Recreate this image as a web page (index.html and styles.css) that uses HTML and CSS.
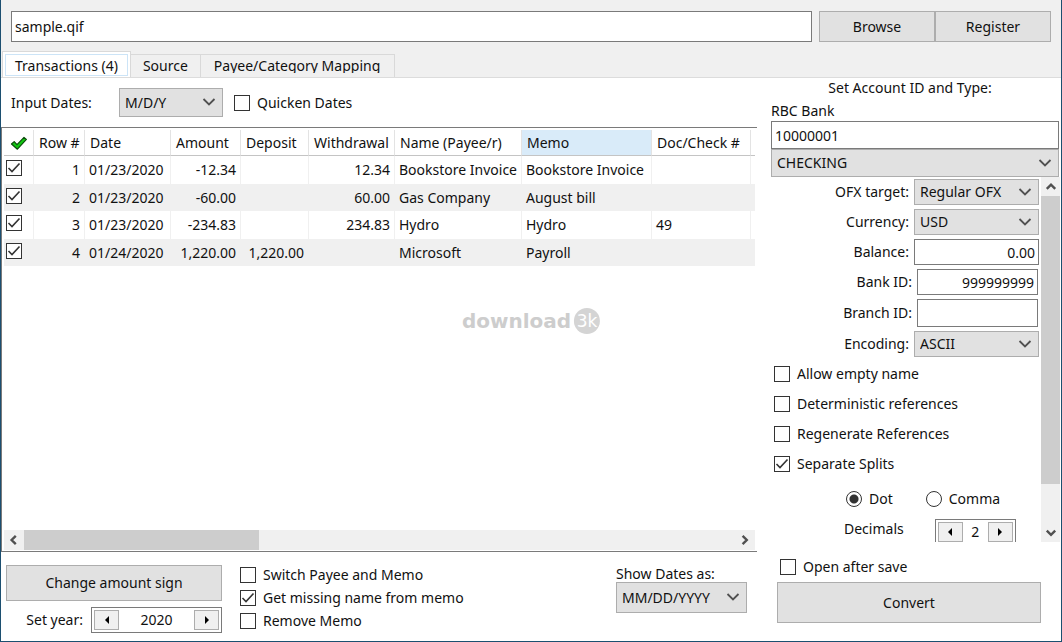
FILE: index.html
```html
<!DOCTYPE html>
<html lang="en">
<head>
<meta charset="utf-8">
<title>sample.qif</title>
<link rel="stylesheet" href="styles.css">
</head>
<body>
<div class="window">
  <header class="topbar">
    <input class="field file" type="text" value="sample.qif" aria-label="File">
    <div class="topbar-buttons">
      <button class="btn" type="button">Browse</button>
      <button class="btn" type="button">Register</button>
    </div>
  </header>

  <nav class="tabs" role="tablist">
    <button class="tab active" type="button" role="tab" aria-selected="true"><span>Transactions (4)</span></button>
    <button class="tab" type="button" role="tab"><span>Source</span></button>
    <button class="tab clipped" type="button" role="tab"><span>Payee/Category Mapping</span></button>
  </nav>

  <main class="panel">
    <section class="left">
      <div class="toolbar">
        <label class="toolbar-label" for="indates">Input Dates:</label>
        <select class="select indates" id="indates"><option>M/D/Y</option></select>
        <label class="check"><input type="checkbox"><span>Quicken Dates</span></label>
      </div>

      <div class="list">
        <table class="grid">
          <colgroup>
            <col class="c-check"><col class="c-row"><col class="c-date"><col class="c-amount"><col class="c-deposit"><col class="c-withdrawal"><col class="c-name"><col class="c-memo"><col class="c-doc"><col>
          </colgroup>
          <thead>
            <tr>
              <th class="mid"><svg class="tick" viewBox="0 0 18 15" aria-label="Selected"><path d="M1.5 8 L4.2 5.6 L7 8.6 L14 1.4 L16.4 3.4 L7.4 13.2 Z" fill="#12c812" stroke="#0b4d0b" stroke-width="1.2" stroke-linejoin="round"/></svg></th>
              <th>Row #</th><th>Date</th><th>Amount</th><th>Deposit</th><th>Withdrawal</th><th>Name (Payee/r)</th><th class="sorted">Memo</th><th>Doc/Check #</th><th></th>
            </tr>
          </thead>
          <tbody>
            <tr><td class="box"><input type="checkbox" checked aria-label="Row 1"></td><td class="num">1</td><td>01/23/2020</td><td class="num">-12.34</td><td class="num"></td><td class="num">12.34</td><td>Bookstore Invoice</td><td>Bookstore Invoice</td><td></td><td></td></tr>
            <tr><td class="box"><input type="checkbox" checked aria-label="Row 2"></td><td class="num">2</td><td>01/23/2020</td><td class="num">-60.00</td><td class="num"></td><td class="num">60.00</td><td>Gas Company</td><td>August bill</td><td></td><td></td></tr>
            <tr><td class="box"><input type="checkbox" checked aria-label="Row 3"></td><td class="num">3</td><td>01/23/2020</td><td class="num">-234.83</td><td class="num"></td><td class="num">234.83</td><td>Hydro</td><td>Hydro</td><td>49</td><td></td></tr>
            <tr><td class="box"><input type="checkbox" checked aria-label="Row 4"></td><td class="num">4</td><td>01/24/2020</td><td class="num">1,220.00</td><td class="num">1,220.00</td><td class="num"></td><td>Microsoft</td><td>Payroll</td><td></td><td></td></tr>
          </tbody>
        </table>
        <div class="hscroll">
          <button class="arrow" type="button" aria-label="Scroll left"><svg viewBox="0 0 10 10"><path d="M6.500 1.500 L3 5 L6.500 8.500"/></svg></button>
          <div class="htrack"><div class="hthumb"></div></div>
          <button class="arrow" type="button" aria-label="Scroll right"><svg viewBox="0 0 10 10"><path d="M3 1.500 L6.500 5 L3 8.500"/></svg></button>
        </div>
      </div>

      <footer class="left-foot">
        <div class="sign">
          <button class="btn" type="button">Change amount sign</button>
          <div class="year">
            <label for="year">Set year:</label>
            <div class="spin">
              <button type="button" aria-label="Previous year"><svg viewBox="0 0 8 8"><path d="M6 0 L2 4 L6 8 Z"/></svg></button>
              <input id="year" type="text" value="2020">
              <button type="button" aria-label="Next year"><svg viewBox="0 0 8 8"><path d="M2 0 L6 4 L2 8 Z"/></svg></button>
            </div>
          </div>
        </div>
        <div class="options">
          <label class="check"><input type="checkbox"><span>Switch Payee and Memo</span></label>
          <label class="check"><input type="checkbox" checked><span>Get missing name from memo</span></label>
          <label class="check"><input type="checkbox"><span>Remove Memo</span></label>
        </div>
        <div class="showdates">
          <label for="showdates">Show Dates as:</label>
          <select class="select" id="showdates"><option>MM/DD/YYYY</option></select>
        </div>
      </footer>
    </section>

    <aside class="right">
      <div class="title">Set Account ID and Type:</div>
      <label class="bank" for="account">RBC Bank</label>
      <input class="field account" id="account" type="text" value="10000001">
      <select class="select type" aria-label="Account type"><option>CHECKING</option></select>

      <div class="scroller">
        <div class="form">
          <div class="row"><label for="ofx">OFX target:</label><select class="select" id="ofx"><option>Regular OFX</option></select></div>
          <div class="row"><label for="cur">Currency:</label><select class="select" id="cur"><option>USD</option></select></div>
          <div class="row"><label for="bal">Balance:</label><input class="field" id="bal" type="text" value="0.00"></div>
          <div class="row narrow"><label for="bid">Bank ID:</label><input class="field" id="bid" type="text" value="999999999"></div>
          <div class="row narrow tall"><label for="brid">Branch ID:</label><input class="field" id="brid" type="text" value=""></div>
          <div class="row"><label for="enc">Encoding:</label><select class="select" id="enc"><option>ASCII</option></select></div>
          <div class="flags">
            <label class="check"><input type="checkbox"><span>Allow empty name</span></label>
            <label class="check"><input type="checkbox"><span>Deterministic references</span></label>
            <label class="check"><input type="checkbox"><span>Regenerate References</span></label>
            <label class="check"><input type="checkbox" checked><span>Separate Splits</span></label>
          </div>
          <div class="radios">
            <label class="check"><input type="radio" name="sep" checked><span>Dot</span></label>
            <label class="check"><input type="radio" name="sep"><span>Comma</span></label>
          </div>
          <div class="decimals">
            <label for="dec">Decimals</label>
            <div class="spin">
              <button type="button" aria-label="Fewer decimals"><svg viewBox="0 0 8 8"><path d="M6 0 L2 4 L6 8 Z"/></svg></button>
              <input id="dec" type="text" value="2">
              <button type="button" aria-label="More decimals"><svg viewBox="0 0 8 8"><path d="M2 0 L6 4 L2 8 Z"/></svg></button>
            </div>
          </div>
        </div>
        <div class="vscroll">
          <button class="arrow" type="button" aria-label="Scroll up"><svg viewBox="0 0 10 10"><path d="M1.500 6.500 L5 3 L8.500 6.500"/></svg></button>
          <div class="vtrack"><div class="vthumb"></div></div>
          <button class="arrow" type="button" aria-label="Scroll down"><svg viewBox="0 0 10 10"><path d="M1.500 3 L5 6.500 L8.500 3"/></svg></button>
        </div>
      </div>

      <footer class="right-foot">
        <label class="check"><input type="checkbox"><span>Open after save</span></label>
        <button class="btn" type="button">Convert</button>
      </footer>
    </aside>
  </main>

  <div class="watermark"><span>download</span><span class="badge">3k</span></div>
</div>
</body>
</html>
```
FILE: styles.css
```css
* { box-sizing: border-box; }

body {
  margin: 0;
  background: #f0f0f0;
  color: #111;
  font: 14px/20px "Noto Sans", "Open Sans", sans-serif;
}

button, input, select { font: inherit; color: inherit; margin: 0; }

.window {
  position: relative;
  display: flex;
  flex-direction: column;
  height: 100vh;
  min-height: 640px;
  border: solid #1c4f70;
  border-width: 0 1px 1px;
}

.btn { background: #e1e1e1; border: 1px solid #adadad; padding: 0; }

.field {
  background: #fff;
  border: 1px solid #7a7a7a;
  border-radius: 0;
  padding: 0 3px;
  min-width: 0;
  outline: none;
}

.select {
  appearance: none;
  background: #e1e1e1 url("data:image/svg+xml,%3Csvg xmlns='http://www.w3.org/2000/svg' width='14' height='9'%3E%3Cpath d='M1.5 1 L7 6.500 L12.500 1' fill='none' stroke='%23505050' stroke-width='1.800'/%3E%3C/svg%3E") no-repeat right 6px center;
  border: 1px solid #adadad;
  border-radius: 0;
  padding: 0 5px;
}

.check { display: flex; align-items: center; gap: 7px; }

input[type="checkbox"], input[type="radio"] {
  appearance: none;
  flex: none;
  width: 16px;
  height: 16px;
  background: #fff;
  border: 1px solid #333;
}

input[type="checkbox"]:checked {
  background: #fff url("data:image/svg+xml,%3Csvg xmlns='http://www.w3.org/2000/svg' width='14' height='14'%3E%3Cpath d='M1.500 7 L5 10.500 L12.500 2.500' fill='none' stroke='%23333' stroke-width='1.600'/%3E%3C/svg%3E") no-repeat center;
}

input[type="radio"] { border-radius: 50%; }
input[type="radio"]:checked { background: radial-gradient(circle, #333 4px, #fff 5px); }

/* File bar */
.topbar { display: flex; gap: 7px; padding: 11px 10px 9px; }
.file { flex: 1; height: 31px; }
.topbar-buttons { display: flex; }
.topbar-buttons .btn { width: 116px; height: 31px; }

/* Tabs */
.tabs { display: flex; align-items: flex-end; height: 26px; padding-left: 1px; }
.tab {
  height: 23px;
  padding: 0 12px;
  background: #f0f0f0;
  border: 1px solid #d9d9d9;
  border-width: 1px 1px 0 0;
}
.tab span { display: block; height: 20px; margin-bottom: 1px; }
.tab.clipped { padding: 0 14px 0 13px; }
.tab.clipped span { height: 17px; overflow: hidden; margin-bottom: 4px; }
.tab.active {
  height: 26px;
  padding: 2px;
  background: #fff;
  border-left-width: 1px;
}
.tab.active span { height: 22px; padding: 1px 9px; border: 1px solid #cce4f7; }

/* Main panel */
.panel {
  flex: 1;
  min-height: 0;
  display: grid;
  grid-template-columns: minmax(0, 1fr) 290px;
  gap: 14px;
  background: #fff;
  border-top: 1px solid #dcdcdc;
}
.left, .right { display: flex; flex-direction: column; min-height: 0; }

.toolbar { display: flex; align-items: center; height: 49px; padding-left: 10px; }
.toolbar-label { width: 108px; }
.indates { width: 104px; height: 29px; margin-right: 11px; }

/* Transaction list */
.list {
  flex: 1;
  display: flex;
  flex-direction: column;
  justify-content: space-between;
  padding: 2px 2px 1px;
  border: 1px solid #7a7a7a;
  border-right: 0;
}
.grid { width: 100%; table-layout: fixed; border-collapse: separate; border-spacing: 0; }
.c-check { width: 30px; }
.c-row { width: 51px; }
.c-date { width: 86px; }
.c-amount { width: 70px; }
.c-deposit { width: 68px; }
.c-withdrawal { width: 86px; }
.c-name { width: 127px; }
.c-memo { width: 130px; }
.c-doc { width: 99px; }
.grid th {
  height: 26px;
  padding: 1px 0 0 5px;
  border-right: 1px solid #e3e3e3;
  border-bottom: 1px solid #c4c4c4;
  font-weight: 400;
  text-align: left;
  white-space: nowrap;
}
.grid th.mid { padding: 0; text-align: center; }
.grid th.sorted { background: #d9ebf9; }
.grid th:last-child, .grid td:last-child { border-right: 0; }
.tick { display: block; width: 18px; height: 15px; margin: 2px auto 0; }
.grid td {
  height: 28px;
  padding: 0 4px;
  border-right: 1px solid #f0f0f0;
  white-space: nowrap;
}
.grid tr:nth-child(even) td { height: 27px; background: #f0f0f0; }
.grid td.num { text-align: right; }
.grid td.box { padding: 4px 0 0 2px; vertical-align: top; }
.grid td.box input { display: block; }

/* Scroll bars */
.arrow { display: grid; place-items: center; padding: 0; border: 0; background: #f0f0f0; }
.arrow svg { width: 12px; height: 12px; fill: none; stroke: #505050; stroke-width: 2; }
.hscroll { display: flex; height: 20px; }
.hscroll .arrow { width: 20px; }
.htrack { flex: 1; background: #f0f0f0; }
.hthumb { width: 33%; height: 100%; background: #cdcdcd; }

/* Options below the list */
.left-foot { display: flex; height: 89px; padding: 13px 10px 0 5px; }
.sign { width: 216px; margin-right: 18px; }
.sign .btn { display: block; width: 100%; height: 36px; margin-bottom: 6px; }
.year { display: flex; align-items: center; justify-content: flex-end; gap: 8px; }
.spin {
  display: flex;
  padding: 2px;
  background: #fff;
  border: 1px solid #7a7a7a;
}
.spin button {
  flex: none;
  display: grid;
  place-items: center;
  width: 25px;
  height: 20px;
  padding: 0;
  background: #f0f0f0;
  border: 1px solid #adadad;
}
.spin svg { width: 8px; height: 8px; }
.spin input { flex: 1; min-width: 0; height: 20px; padding: 0; border: 0; background: none; text-align: center; }
.year .spin { width: 131px; }
.options { display: flex; flex-direction: column; gap: 3px; }
.showdates { display: flex; flex-direction: column; margin-left: auto; width: 131px; }
.showdates label { line-height: 17px; }
.showdates .select { height: 31px; }

/* Account settings */
.title { padding-right: 12px; text-align: center; }
.bank { padding-top: 3px; }
.account { height: 28px; margin-right: 2px; }
.type { height: 28px; margin-right: 2px; }
.scroller { flex: 1; display: flex; min-height: 0; overflow: hidden; padding-right: 1px; }
.form { flex: 1; padding: 2px 2px 0 0; }
.row { display: flex; justify-content: flex-end; align-items: center; gap: 5px; margin-bottom: 4px; }
.row .select, .row .field { width: 125px; height: 26px; }
.row .field { text-align: right; }
.row.narrow { padding-right: 1px; }
.row.narrow .field { width: 121px; }
.row.tall .field { height: 28px; }
.flags { display: flex; flex-direction: column; gap: 10px; padding: 3px 0 0 3px; }
.radios { display: flex; gap: 33px; padding: 15px 0 0 75px; }
.decimals { display: flex; gap: 31px; padding: 10px 0 0 73px; }
.decimals .spin { width: 81px; height: 27px; }
.vscroll { display: flex; flex-direction: column; width: 19px; background: #f0f0f0; }
.vscroll .arrow { height: 19px; }
.vtrack { flex: 1; }
.vthumb { width: 100%; height: 88%; background: #cdcdcd; }

.right-foot { height: 99px; padding: 15px 20px 0 6px; }
.right-foot .check { margin: 0 0 5px 3px; }
.right-foot .btn { display: block; width: 100%; height: 41px; }

/* Watermark floating over the list */
.watermark {
  position: absolute;
  top: 50%;
  left: 50%;
  transform: translate(-50%, -50%);
  display: flex;
  align-items: center;
  gap: 3px;
  color: #cdcdcd;
  font: bold 20px/26px "DejaVu Sans", sans-serif;
  pointer-events: none;
}
.badge {
  width: 26px;
  height: 26px;
  border-radius: 50%;
  background: #d4d4d4;
  color: #fff;
  font-size: 17px;
  font-weight: 400;
  text-align: center;
}
```
